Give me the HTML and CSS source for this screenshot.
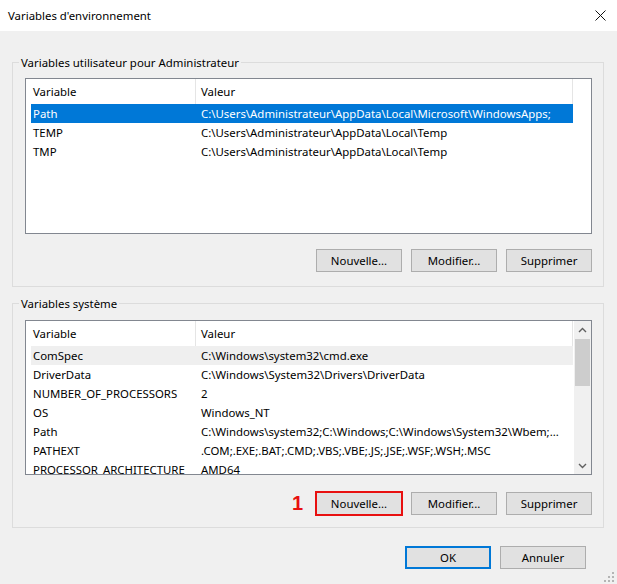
FILE: index.html
```html
<!DOCTYPE html>
<html lang="fr">
<head>
<meta charset="utf-8">
<title>Variables d'environnement</title>
<link rel="stylesheet" href="styles.css">
</head>
<body>
<div class="window">
  <div class="titlebar">
    <span class="title">Variables d'environnement</span>
    <span class="close">
      <svg width="11" height="11" viewBox="0 0 11 11"><path d="M0.5 0.5 L10.5 10.5 M10.5 0.5 L0.5 10.5" stroke="#111" stroke-width="1" fill="none"/></svg>
    </span>
  </div>
  <div class="body">
    <section class="group group-user">
      <div class="group-title">Variables utilisateur pour Administrateur</div>
      <div class="listview lv-user">
        <div class="lv-main">
          <div class="lv-header"><div class="hcol c1">Variable</div><div class="hcol c2">Valeur</div></div>
          <div class="lv-row selected"><div class="cell c1">Path</div><div class="cell c2">C:\Users\Administrateur\AppData\Local\Microsoft\WindowsApps;</div></div>
          <div class="lv-row"><div class="cell c1">TEMP</div><div class="cell c2">C:\Users\Administrateur\AppData\Local\Temp</div></div>
          <div class="lv-row"><div class="cell c1">TMP</div><div class="cell c2">C:\Users\Administrateur\AppData\Local\Temp</div></div>
        </div>
      </div>
      <div class="btn-row">
        <button class="btn">Nouvelle...</button>
        <button class="btn">Modifier...</button>
        <button class="btn">Supprimer</button>
      </div>
    </section>

    <section class="group group-sys">
      <div class="group-title">Variables système</div>
      <div class="listview lv-sys">
        <div class="lv-main">
          <div class="lv-header"><div class="hcol c1">Variable</div><div class="hcol c2">Valeur</div></div>
          <div class="lv-row inactive"><div class="cell c1">ComSpec</div><div class="cell c2">C:\Windows\system32\cmd.exe</div></div>
          <div class="lv-row"><div class="cell c1">DriverData</div><div class="cell c2">C:\Windows\System32\Drivers\DriverData</div></div>
          <div class="lv-row"><div class="cell c1">NUMBER_OF_PROCESSORS</div><div class="cell c2">2</div></div>
          <div class="lv-row"><div class="cell c1">OS</div><div class="cell c2">Windows_NT</div></div>
          <div class="lv-row"><div class="cell c1">Path</div><div class="cell c2">C:\Windows\system32;C:\Windows;C:\Windows\System32\Wbem;...</div></div>
          <div class="lv-row"><div class="cell c1">PATHEXT</div><div class="cell c2">.COM;.EXE;.BAT;.CMD;.VBS;.VBE;.JS;.JSE;.WSF;.WSH;.MSC</div></div>
          <div class="lv-row"><div class="cell c1">PROCESSOR_ARCHITECTURE</div><div class="cell c2">AMD64</div></div>
        </div>
        <div class="scrollbar">
          <div class="sb-btn"><svg width="9" height="6" viewBox="0 0 9 6"><path d="M1 5 L4.5 1.5 L8 5" stroke="#606060" stroke-width="1.4" fill="none"/></svg></div>
          <div class="sb-track"><div class="sb-thumb"></div></div>
          <div class="sb-btn"><svg width="9" height="6" viewBox="0 0 9 6"><path d="M1 1 L4.5 4.5 L8 1" stroke="#606060" stroke-width="1.4" fill="none"/></svg></div>
        </div>
      </div>
      <div class="btn-row">
        <span class="marker">1</span>
        <button class="btn highlight">Nouvelle...</button>
        <button class="btn">Modifier...</button>
        <button class="btn">Supprimer</button>
      </div>
    </section>

    <div class="footer">
      <button class="btn btn-default">OK</button>
      <button class="btn">Annuler</button>
    </div>
  </div>
  <div class="grip">
    <svg width="10" height="10" viewBox="0 0 10 10" fill="#b4b4b4">
      <rect x="8" y="0" width="2" height="2"/>
      <rect x="4" y="4" width="2" height="2"/><rect x="8" y="4" width="2" height="2"/>
      <rect x="0" y="8" width="2" height="2"/><rect x="4" y="8" width="2" height="2"/><rect x="8" y="8" width="2" height="2"/>
    </svg>
  </div>
</div>
</body>
</html>
```

FILE: styles.css
```css
html, body {
  margin: 0;
  padding: 0;
}
body {
  width: 617px;
  height: 584px;
  overflow: hidden;
  background: #f0f0f0;
  font-family: "Segoe UI", "Noto Sans", "Open Sans", sans-serif;
  font-size: 11.4px;
  color: #000;
}
.window {
  position: relative;
  height: 584px;
}
.titlebar {
  height: 31px;
  background: #fff;
  display: flex;
  align-items: center;
  padding-left: 8px;
}
.title {
  flex: 1;
}
.close {
  width: 34px;
  display: flex;
  justify-content: center;
  align-items: center;
}
.body {
  padding: 0 13px 0 12px;
}
.group {
  border: 1px solid #dcdcdc;
  padding: 0 11px 14px 12px;
}
.group-user {
  margin-top: 31px;
}
.group-sys {
  margin-top: 16px;
  padding-bottom: 12px;
}
.group-title {
  margin: -8px 0 0 -6px;
  padding: 0 2px;
  background: #f0f0f0;
  width: max-content;
  line-height: 15px;
}
.listview {
  box-sizing: border-box;
  border: 1px solid #828790;
  background: #fff;
  display: flex;
  overflow: hidden;
}
.lv-user {
  margin-top: 8px;
  height: 156px;
}
.lv-sys {
  margin-top: 9px;
  height: 155px;
}
.lv-main {
  flex: 1;
  overflow: hidden;
}
.lv-header {
  display: flex;
  height: 25px;
}
.hcol {
  box-sizing: border-box;
  height: 25px;
  line-height: 25px;
  border-right: 1px solid #e5e5e5;
  white-space: nowrap;
}
.hcol.c1 {
  width: 170px;
  padding-left: 7px;
}
.hcol.c2 {
  width: 377px;
  padding-left: 5px;
}
.lv-row {
  display: flex;
  height: 19px;
  line-height: 19px;
  margin-left: 5px;
  width: 542px;
}
.lv-row.selected {
  background: #0078d7;
  color: #fff;
}
.lv-row.inactive {
  background: #efefef;
}
.cell {
  box-sizing: border-box;
  white-space: nowrap;
  overflow: hidden;
}
.cell.c1 {
  width: 164px;
  padding-left: 2px;
}
.cell.c2 {
  width: 378px;
  padding-left: 6px;
}
.scrollbar {
  width: 17px;
  background: #f0f0f0;
  display: flex;
  flex-direction: column;
}
.sb-btn {
  height: 17px;
  display: flex;
  align-items: center;
  justify-content: center;
}
.sb-track {
  flex: 1;
  padding: 1px 1px 0;
}
.sb-thumb {
  height: 47px;
  background: #cdcdcd;
}
.btn-row {
  display: flex;
  justify-content: flex-end;
  align-items: center;
  gap: 9px;
  margin-top: 15px;
}
.group-sys .btn-row {
  margin-top: 17px;
}
.btn {
  box-sizing: border-box;
  width: 86px;
  height: 23px;
  padding: 0;
  background: #e1e1e1;
  border: 1px solid #adadad;
  font-family: inherit;
  font-size: 11.4px;
  color: #000;
}
.btn.highlight {
  outline: 2px solid #e81010;
  outline-offset: -1px;
}
.btn-default {
  border: 2px solid #0078d7;
}
.marker {
  font-family: "Liberation Sans", Arial, sans-serif;
  font-weight: bold;
  font-size: 20px;
  line-height: 23px;
  color: #e81010;
  margin-right: 4px;
}
.footer {
  display: flex;
  justify-content: flex-end;
  gap: 9px;
  margin-top: 18px;
  padding-right: 18px;
}
.grip {
  position: absolute;
  right: 3px;
  bottom: 2px;
  line-height: 0;
}
```
